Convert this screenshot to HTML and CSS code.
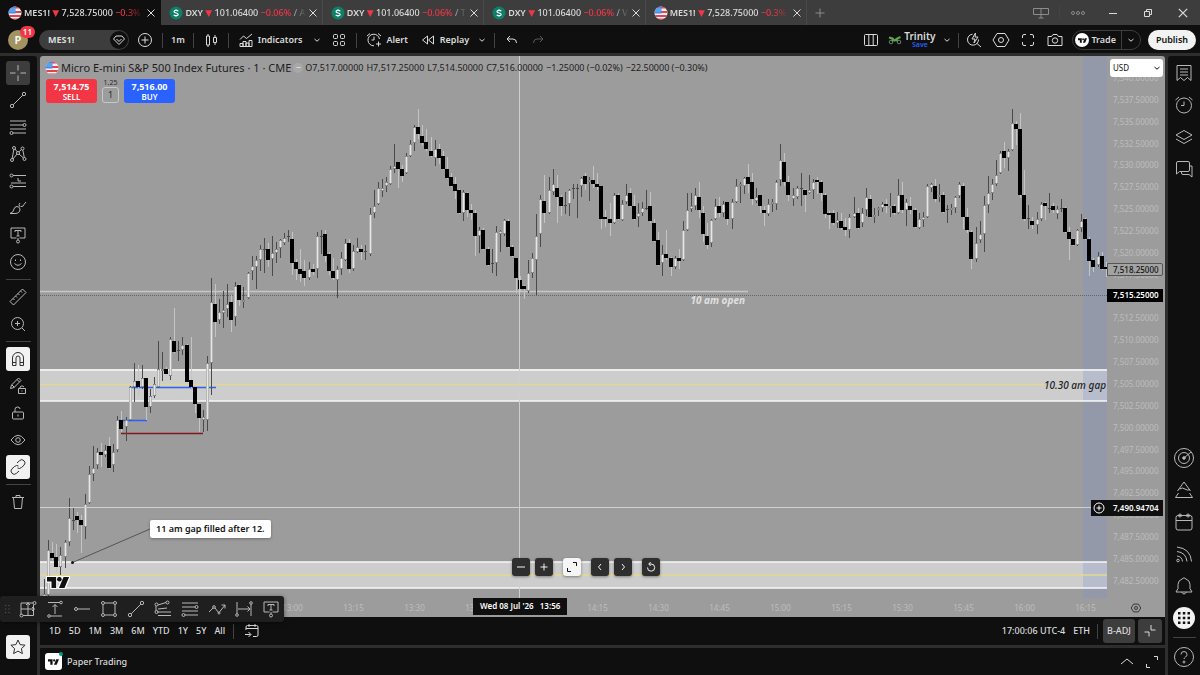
FILE: index.html
```
<!DOCTYPE html>
<html lang="en">
<head>
    <meta charset="UTF-8">
    <title>MES1! 7,528.75000</title>
    <link rel="stylesheet" href="styles.css">
</head>
<body>
    <!-- Shared icons -->
    <svg class="sprite" aria-hidden="true">
        <symbol id="flag" viewBox="0 0 14 14">
            <clipPath id="flagClip"><circle cx="7" cy="7" r="6.5"/></clipPath>
            <g clip-path="url(#flagClip)" stroke="none">
                <rect width="14" height="14" fill="#f2f2f2"/>
                <path d="M0 0h14v2.5H0zM0 5h14v2H0zM0 9h14v2H0zM0 12.5h14V14H0z" fill="#e8414d"/>
                <rect width="7.5" height="7.5" fill="#3e8fe8"/>
                <path d="M1.5 3h5M1.5 5h5" stroke="#dcebfb" stroke-width="0.8" stroke-dasharray="1 1"/>
            </g>
        </symbol>
        <symbol id="dollar" viewBox="0 0 14 14">
            <circle cx="7" cy="7" r="6.5" fill="#0d8067" stroke="none"/>
            <path d="M9.2 5.2C8.8 4.2 5 4 5 5.7c0 1.6 4.2 1 4.2 2.7 0 1.7-4 1.5-4.4.3M7 3.2v1M7 9.8v1" stroke="#fff" stroke-width="1.2" fill="none"/>
        </symbol>
        <symbol id="close" viewBox="0 0 10 10"><path d="M1.5 1.5l7 7M8.5 1.5l-7 7"/></symbol>
        <symbol id="chevron" viewBox="0 0 10 10"><path d="M2.5 4L5 6.2 7.5 4"/></symbol>
        <symbol id="tv" viewBox="0 0 24 12">
            <path d="M0 0h10v12H5V5H0z M18 0h6l-5 12h-6z" stroke="none"/><circle cx="13.5" cy="2.5" r="2.5" stroke="none"/>
        </symbol>
        <symbol id="textnote" viewBox="0 0 20 20">
            <path d="M3 3h14v10h-5.500M8.500 13H3V3M10 13v2M7 7V5.500h6V7M10 5.500V11M8.500 11h3"/><circle cx="10" cy="16.500" r="1.500"/>
        </symbol>
        <symbol id="trend" viewBox="0 0 20 20">
            <circle cx="4" cy="16" r="1.700"/><circle cx="16" cy="4" r="1.700"/><path d="M5.200 14.800L14.800 5.200"/>
        </symbol>
        <symbol id="levels" viewBox="0 0 20 20">
            <path d="M2 4h16M2 8h13M2 12h16M5 16h13"/><circle cx="16.500" cy="8" r="1.500"/><circle cx="3.500" cy="16" r="1.500"/>
        </symbol>
        <symbol id="hexagon" viewBox="0 0 20 20">
            <path d="M6 3.500h8L18 10l-4 6.500H6L2 10z"/><circle cx="10" cy="10" r="2.500"/>
        </symbol>
    </svg>

    <header class="titlebar">
        <nav class="tabs">
            <a class="tab active" href="#"><svg class="coin"><use href="#flag"/></svg><span class="tab-text"><b>MES1!</b> <i class="down">▼</i> 7,528.75000 <span class="neg">−0.3%</span></span><svg class="x"><use href="#close"/></svg></a>
            <a class="tab" href="#"><svg class="coin"><use href="#dollar"/></svg><span class="tab-text"><b>DXY</b> <i class="down">▼</i> 101.06400 <span class="neg">−0.06%</span> / A</span><svg class="x"><use href="#close"/></svg></a>
            <a class="tab" href="#"><svg class="coin"><use href="#dollar"/></svg><span class="tab-text"><b>DXY</b> <i class="down">▼</i> 101.06400 <span class="neg">−0.06%</span> / T</span><svg class="x"><use href="#close"/></svg></a>
            <a class="tab" href="#"><svg class="coin"><use href="#dollar"/></svg><span class="tab-text"><b>DXY</b> <i class="down">▼</i> 101.06400 <span class="neg">−0.06%</span> / V</span><svg class="x"><use href="#close"/></svg></a>
            <a class="tab" href="#"><svg class="coin"><use href="#flag"/></svg><span class="tab-text"><b>MES1!</b> <i class="down">▼</i> 7,528.75000 <span class="neg">−0.3%</span></span><svg class="x"><use href="#close"/></svg></a>
        </nav>
        <button class="bare new-tab" aria-label="New tab"><svg class="ic12" viewBox="0 0 12 12"><path d="M6 1.500v9M1.500 6h9"/></svg></button>
        <div class="window-buttons">
            <button class="bare dim" aria-label="Split"><svg class="ic20" viewBox="0 0 20 20"><path d="M2.500 5.500h15v6h-15zM10 5.500V15M7.500 15h5M6 11.500h8"/></svg></button>
            <span class="sep"></span>
            <button class="bare dim" aria-label="More"><svg class="ic20" viewBox="0 0 20 20"><circle cx="5" cy="10" r="1.500"/><circle cx="10" cy="10" r="1.500"/><circle cx="15" cy="10" r="1.500"/></svg></button>
            <button class="bare" aria-label="Minimize"><svg class="ic12" viewBox="0 0 12 12"><path d="M2 6.500h8"/></svg></button>
            <button class="bare" aria-label="Restore"><svg class="ic12" viewBox="0 0 12 12"><path d="M2.500 4.500h5v5h-5zM4.500 4.500v-2h5v5h-2"/></svg></button>
            <button class="bare" aria-label="Close"><svg class="ic12"><use href="#close"/></svg></button>
        </div>
    </header>

    <div class="toolbar">
        <div class="avatar">P<span class="badge">11</span></div>
        <button class="symbol-search">MES1!<span class="gem"><svg class="ic14" viewBox="0 0 14 14"><path d="M4 3h6l2.500 3L7 11.500 1.500 6zM4.500 6L7 8.500 9.500 6"/></svg></span></button>
        <button class="bare" aria-label="Compare"><svg class="ic20" viewBox="0 0 20 20"><circle cx="10" cy="10" r="6.500"/><path d="M10 6.500v7M6.500 10h7"/></svg></button>
        <span class="sep"></span>
        <button class="bare interval">1m</button>
        <span class="sep"></span>
        <button class="bare" aria-label="Candles"><svg class="ic20" viewBox="0 0 20 20"><path d="M5.500 6h3v9h-3zM7 4v2M7 15v2M12.500 7.500h3v5h-3zM14 5v2.500M14 12.500V15"/></svg></button>
        <span class="sep"></span>
        <button class="bare labelled indicators"><svg class="ic20" viewBox="0 0 20 20"><path d="M4 16.500v-3h3v3M7 16.500v-5h3v5M10 16.500V13h3v3.500M13 16.500v-6h3v6M4 16.500h12M4 9.500l3.500-3.500 3 2.500L16 4"/></svg>Indicators</button>
        <button class="bare" aria-label="Favorite indicators"><svg class="ic10"><use href="#chevron"/></svg></button>
        <button class="bare layouts" aria-label="Templates"><svg class="ic20" viewBox="0 0 20 20"><rect x="4.500" y="4.500" width="4" height="4" rx="1"/><rect x="11.500" y="4.500" width="4" height="4" rx="1"/><rect x="4.500" y="11.500" width="4" height="4" rx="1"/><rect x="11.500" y="11.500" width="4" height="4" rx="1"/></svg></button>
        <span class="sep"></span>
        <button class="bare labelled"><svg class="ic20" viewBox="0 0 20 20"><path d="M15.500 9A5.800 5.800 0 1 0 10 15.800M10 6.500V10H7.500M3 6l3-2.500M14 3.500L17 6M14.500 11.500v5M12 14h5"/></svg>Alert</button>
        <button class="bare labelled replay"><svg class="ic20" viewBox="0 0 20 20"><path d="M9.500 6v8l-5-4zM15.500 6v8l-5-4z"/></svg>Replay</button>
        <button class="bare" aria-label="Replay menu"><svg class="ic10"><use href="#chevron"/></svg></button>
        <span class="sep"></span>
        <button class="bare undo" aria-label="Undo"><svg class="ic20" viewBox="0 0 20 20"><path d="M8 6L5 9l3 3M5 9h6q3.500 0 3.500 4"/></svg></button>
        <button class="bare undo faded" aria-label="Redo"><svg class="ic20" viewBox="0 0 20 20"><path d="M12 6l3 3-3 3M15 9H9q-3.500 0-3.500 4"/></svg></button>

        <div class="toolbar-right">
            <button class="bare" aria-label="Layout"><svg class="ic20" viewBox="0 0 20 20"><rect x="3.500" y="4.500" width="13" height="11" rx="1"/><path d="M7.800 4.500v11M12.200 4.500v11"/></svg></button>
            <button class="bare trinity"><svg class="bike" viewBox="0 0 14 10"><circle cx="3" cy="7" r="1.800" stroke="#6f7f74"/><circle cx="11" cy="7" r="1.800" stroke="#6f7f74"/><path d="M1 2.500l3.500 1 2 2 2.500-2L12.500 2M3.500 5.500l3.500-.5 3 .5" stroke="#5da54a" stroke-width="2"/></svg><span>Trinity<small>Save</small></span></button>
            <button class="bare trinity-menu" aria-label="Layout menu"><svg class="ic10"><use href="#chevron"/></svg></button>
            <span class="sep"></span>
            <button class="bare" aria-label="Quick search"><svg class="ic20" viewBox="0 0 20 20"><path d="M8.500 4.200A5.500 5.500 0 1 0 14.500 9.500M13 13.500l4 3.500M11.500 3L8 9h3l-1 4 4-6h-3z"/></svg></button>
            <button class="bare" aria-label="Settings"><svg class="ic20"><use href="#hexagon"/></svg></button>
            <button class="bare" aria-label="Fullscreen"><svg class="ic20" viewBox="0 0 20 20"><path d="M4.500 8V6q0-1.500 1.500-1.500h2M12 4.500h2q1.500 0 1.500 1.500v2M15.500 12v2q0 1.500-1.500 1.500h-2M8 15.500H6q-1.500 0-1.500-1.500v-2"/></svg></button>
            <button class="bare" aria-label="Snapshot"><svg class="ic20" viewBox="0 0 20 20"><path d="M3 6.500h3.500L8 4.500h4l1.500 2H17v9H3z"/><circle cx="10" cy="10.500" r="2.700"/></svg></button>
            <div class="trade">
                <button class="bare trade-main"><span class="tv-badge"><svg><use href="#tv"/></svg></span>Trade</button>
                <button class="bare trade-menu" aria-label="Trade menu"><svg class="ic10"><use href="#chevron"/></svg></button>
            </div>
            <button class="publish">Publish</button>
        </div>
    </div>

    <div class="workspace">
        <aside class="drawing">
            <button class="tool on" aria-label="Cross"><svg class="ic20" viewBox="0 0 20 20"><path d="M10 2v5.500M10 12.500V18M2 10h5.500M12.500 10H18"/></svg></button>
            <button class="tool" aria-label="Trend line"><svg class="ic20"><use href="#trend"/></svg></button>
            <button class="tool" aria-label="Fib retracement"><svg class="ic20"><use href="#levels"/></svg></button>
            <button class="tool" aria-label="Patterns"><svg class="ic20" viewBox="0 0 20 20"><circle cx="4" cy="16" r="1.500"/><circle cx="6" cy="4" r="1.500"/><circle cx="10" cy="9" r="1.500"/><circle cx="14.500" cy="4.500" r="1.500"/><circle cx="16.500" cy="15" r="1.500"/><path d="M4.200 14.500L5.800 5.500M7 5l2.200 2.800M11 7.800l2.500-2.300M14.800 6l1.500 7.500M5 15l4-5M11 10l4.500 4"/></svg></button>
            <button class="tool" aria-label="Forecast"><svg class="ic20" viewBox="0 0 20 20"><path d="M5 4.500h13M5 15.500h13M3 12h15M10 7v3h3"/><circle cx="3.500" cy="4.500" r="1.500"/><circle cx="3.500" cy="15.500" r="1.500"/></svg></button>
            <button class="tool" aria-label="Brush"><svg class="ic20" viewBox="0 0 20 20"><path d="M2 15.500q3.500-1 4-4.500.7-2.500 3-2.500t3 2.500q0 4.500-5 4.500zM11.500 8.500Q10.500 6 12 5M12.500 8.500q3 .5 3.500-2L18 4"/></svg></button>
            <button class="tool" aria-label="Text"><svg class="ic20"><use href="#textnote"/></svg></button>
            <button class="tool" aria-label="Icons"><svg class="ic20" viewBox="0 0 20 20"><circle cx="10" cy="10" r="7.500"/><path d="M6.500 11.500q3.500 3.500 7 0M7.500 7.500v1.500M12.500 7.500v1.500"/></svg></button>
            <span class="rule"></span>
            <button class="tool" aria-label="Measure"><svg class="ic20" viewBox="0 0 20 20"><path d="M2 14.500L14.500 2 18 5.500 5.500 18zM5 11.500l1.500 1.500M7.500 9l1.500 1.500M10 6.500l1.500 1.500M12.500 4l1.500 1.500"/></svg></button>
            <button class="tool" aria-label="Zoom in"><svg class="ic20" viewBox="0 0 20 20"><circle cx="9.500" cy="9.500" r="6"/><path d="M14 14l3 3M9.500 7v5M7 9.500h5"/></svg></button>
            <span class="rule"></span>
            <button class="tool lit" aria-label="Magnet"><svg class="ic20" viewBox="0 0 20 20"><path d="M4.500 16.500V9a5.500 5.500 0 0 1 11 0v7.500h-3.500V9a2 2 0 0 0-4 0v7.500zM4.500 13.500H8M12 13.500h3.500"/></svg></button>
            <button class="tool" aria-label="Keep drawing"><svg class="ic20" viewBox="0 0 20 20"><path d="M2.500 12.500l1-3.500 7-7 2.500 2.500-7 7zM4 9l2.500 2.500M9 3.500L11.500 6"/><path d="M10.500 12.500h7v5h-7zM12 12.500V11q2-2.500 4 0M14 14.500v1"/></svg></button>
            <button class="tool" aria-label="Lock"><svg class="ic20" viewBox="0 0 20 20"><rect x="4.500" y="9" width="11" height="7" rx="1"/><path d="M7 9V6.500q0-2.500 2.500-2.500T12 6M10 11.500v2"/></svg></button>
            <button class="tool" aria-label="Hide"><svg class="ic20" viewBox="0 0 20 20"><path d="M3 10q7-9.500 14 0-7 9.500-14 0z"/><circle cx="10" cy="10" r="2.300"/></svg></button>
            <button class="tool lit" aria-label="Link"><svg class="ic20" viewBox="0 0 20 20"><path d="M9 6l2.500-2.300a3 3 0 0 1 4.500 4.500L13.500 10.500q-2 1.700-4 .5M11 14l-2.500 2.300A3 3 0 0 1 4 11.800L6.500 9.500q2-1.700 4-.5"/></svg></button>
            <span class="rule"></span>
            <button class="tool" aria-label="Remove"><svg class="ic20" viewBox="0 0 20 20"><path d="M4 5.500h12M8 5.500v-2h4v2M5.500 5.500l1 11h7l1-11"/></svg></button>
            <button class="tool lit star" aria-label="Favorites"><svg class="ic20" viewBox="0 0 20 20"><path d="M10 3l2.100 4.600 5 .6-3.700 3.400 1 5L10 14.100 5.600 16.600l1-5L2.900 8.200l5-.6z"/></svg></button>
        </aside>

        <main class="center">
            <section class="chart">
                <div class="plot">
                    <svg id="plot" class="plot-svg" viewBox="40 56 1067 542" preserveAspectRatio="none">
                        <rect x="40" y="369" width="1067" height="32" fill="#cdcdcd"/>
                        <rect x="40" y="562" width="1067" height="26" fill="#cdcdcd"/>
                        <rect x="1083" y="56" width="24" height="542" fill="#7c90d0" fill-opacity="0.250"/>
                        <path d="M40 370h1067M40 401h1067M40 562h1067M40 588h1067" stroke="#f8f8f8" stroke-width="1.500"/>
                        <path d="M40 384.500h1004M40 575h1067" stroke="#e3d98c" stroke-width="1.500"/>
                        <path d="M40 291.500h708" stroke="#c6c6c6" stroke-width="1.500"/>
                        <path d="M40 295.500h1067" stroke="#666" stroke-dasharray="1 1"/>
                        <path d="M129 387.500h87M119 420.500h28" stroke="#2962ff" stroke-width="1.500"/>
                        <path d="M121 433.500h82" stroke="#801922" stroke-width="1.500"/>
                        <g id="candles"></g>
                        <path d="M72.500 562.500L150 529" stroke="#555"/>
                        <circle cx="72.500" cy="562.500" r="1.500" fill="#111"/>
                        <path d="M519.500 56v542M40 507.500h1067" stroke="#cfcfcf"/>
                    </svg>

                    <div class="legend">
                        <svg class="coin"><use href="#flag"/></svg>
                        <span class="name">Micro E-mini S&amp;P 500 Index Futures · 1 · CME</span>
                        <span class="status">−</span>
                        <div class="ohlc"><span>O7,517.00000</span><span>H7,517.25000</span><span>L7,514.50000</span><span>C7,516.00000</span><span>−1.25000 (−0.02%)</span><span>−22.50000 (−0.30%)</span></div>
                    </div>
                    <div class="orders">
                        <button class="order sell">7,514.75<span>SELL</span></button>
                        <div class="spread">1.25<span>1</span></div>
                        <button class="order buy">7,516.00<span>BUY</span></button>
                    </div>

                    <span class="note open-note">10 am open</span>
                    <span class="note gap-note">10.30 am gap</span>
                    <span class="callout">11 am gap filled after 12.</span>
                    <svg class="tv-mark" viewBox="-2 -2 28 16"><use href="#tv" x="0" y="0" width="24" height="12" class="halo"/></svg>

                    <div class="chart-nav">
                        <button aria-label="Zoom out"><svg viewBox="0 0 18 18"><path d="M5 9h8"/></svg></button>
                        <button aria-label="Zoom in"><svg viewBox="0 0 18 18"><path d="M5.500 9h7M9 5.500v7"/></svg></button>
                        <button class="lit" aria-label="Maximize"><svg viewBox="0 0 18 18"><path d="M10 4.500h3.500V8M8 13.500H4.500V10"/></svg></button>
                        <button aria-label="Scroll left"><svg viewBox="0 0 18 18"><path d="M10 6L7.500 9l2.500 3"/></svg></button>
                        <button aria-label="Scroll right"><svg viewBox="0 0 18 18"><path d="M8 6l2.500 3L8 12"/></svg></button>
                        <button aria-label="Reset"><svg viewBox="0 0 18 18"><path d="M5.500 9.500A3.600 3.600 0 1 0 9 6H7M8.700 4L6.700 6l2 2"/></svg></button>
                    </div>
                </div>

                <div class="scale">
                    <div id="prices" class="prices"></div>
                    <select class="currency" aria-label="Currency"><option>USD</option></select>
                    <svg class="ic10 currency-arrow"><use href="#chevron"/></svg>
                    <span class="price-tag last">7,518.25000</span>
                    <span class="price-tag line">7,515.25000</span>
                    <span class="price-tag cross"><svg class="ic14" viewBox="0 0 14 14"><circle cx="7" cy="7" r="5"/><path d="M7 4.500v5M4.500 7h5"/></svg>7,490.94704</span>
                </div>

                <div class="time-axis">
                    <div class="times"><span>13:00</span><span>13:15</span><span>13:30</span><span>13:45</span><span>14:00</span><span>14:15</span><span>14:30</span><span>14:45</span><span>15:00</span><span>15:15</span><span>15:30</span><span>15:45</span><span>16:00</span><span>16:15</span></div>
                    <svg class="axis-settings"><use href="#hexagon"/></svg>
                    <span class="time-tag">Wed 08 Jul '26&nbsp;&nbsp; 13:56</span>
                </div>
            </section>

            <div class="range-bar">
                <button class="bare">1D</button><button class="bare">5D</button><button class="bare">1M</button><button class="bare">3M</button><button class="bare">6M</button><button class="bare">YTD</button><button class="bare">1Y</button><button class="bare">5Y</button><button class="bare">All</button>
                <span class="sep"></span>
                <button class="bare" aria-label="Go to date"><svg class="ic20" viewBox="0 0 20 20"><path d="M4 9V6q0-1.500 1.500-1.500h9Q16 4.500 16 6v8q0 1.500-1.500 1.500H11M4 7.500h12M7 3v3M13 3v3M3 13.500h5.500M6.500 11l2.500 2.500L6.500 16"/></svg></button>
                <div class="range-right">
                    <button class="bare">17:00:06 UTC-4</button>
                    <button class="bare">ETH</button>
                    <span class="sep"></span>
                    <button class="chip">B-ADJ</button>
                    <button class="chip square" aria-label="Log"><svg class="ic20" viewBox="0 0 20 20"><path d="M11 4v5h4.500M4.500 11H9v4.500"/></svg></button>
                </div>
            </div>

            <div class="trading-bar">
                <span class="tv-square"><svg><use href="#tv"/></svg></span>
                <button class="bare">Paper Trading</button>
                <div class="trading-right">
                    <button class="bare" aria-label="Open panel"><svg class="ic20" viewBox="0 0 20 20"><path d="M4 12l6-5 6 5"/></svg></button>
                    <button class="bare" aria-label="Maximize panel"><svg class="ic20" viewBox="0 0 20 20"><path d="M12 4.500h3.500V8M8 15.500H4.500V12"/></svg></button>
                </div>
            </div>
        </main>

        <aside class="widgets">
            <button class="bare" aria-label="Watchlist"><svg viewBox="0 0 22 22"><path d="M4 3.500h14v15l-3.500-3-3.500 3-3.500-3-3.500 3zM7 7h8M7 10h8M7 13h8"/></svg></button>
            <button class="bare" aria-label="Alerts"><svg viewBox="0 0 22 22"><circle cx="11" cy="11.500" r="7.500"/><path d="M11 7.500v4H8M2.500 6L6 3M16 3l3.500 3"/></svg></button>
            <button class="bare" aria-label="Object tree"><svg viewBox="0 0 22 22"><path d="M11 4.500l8 4.500-8 4.500L3 9zM3 13l8 4.500 8-4.500"/></svg></button>
            <button class="bare" aria-label="Chat"><svg viewBox="0 0 22 22"><path d="M5 3.500h10q1.500 0 1.500 1.500v7q0 1.500-1.500 1.500H6.500L3.500 16V5q0-1.500 1.500-1.500zM16.500 8h2.500v11l-3-2.500H10q-1.500 0-1.500-1.500v-1.500"/></svg></button>
            <span class="spacer"></span>
            <button class="bare" aria-label="Screener"><svg viewBox="0 0 22 22"><circle cx="11" cy="11" r="9.500"/><circle cx="11" cy="11" r="5.500"/><circle cx="11" cy="11" r="1.300" fill="currentColor"/><path d="M11 11l7-6"/></svg></button>
            <button class="bare" aria-label="Pine"><svg viewBox="0 0 22 22"><path d="M5.500 14L2.500 18.500h17L16.500 14M4.500 12L11 3l6.500 9M6.500 10q3-2 5.500 0t5 .5"/></svg></button>
            <button class="bare" aria-label="Calendar"><svg viewBox="0 0 22 22"><rect x="3" y="4.500" width="16" height="14.500" rx="2"/><path d="M3 9.500h16"/><circle cx="7" cy="4.500" r="1.500"/><circle cx="15" cy="4.500" r="1.500"/></svg></button>
            <button class="bare" aria-label="News"><svg viewBox="0 0 22 22"><circle cx="5" cy="17.500" r="1.300"/><path d="M4 13q5 .5 5.500 5.500M4 8.500q9 1 10 10M4 4q13.500 1.500 14.500 14.500"/></svg></button>
            <button class="bare" aria-label="Notifications"><svg viewBox="0 0 22 22"><path d="M3 17h16l-2-3.500V9.500q0-4-4-5.500-2-2.500-4 0-4 1.500-4 5.500v4zM8.500 17q2.500 4 5 0"/></svg></button>
            <button class="bare apps" aria-label="Products"><svg viewBox="0 0 22 22"><path d="M5 5h2.500v2.500H5zM9.800 5h2.500v2.500H9.800zM14.500 5H17v2.500h-2.500zM5 9.800h2.500v2.500H5zM9.800 9.800h2.500v2.500H9.800zM14.500 9.800H17v2.500h-2.500zM5 14.500h2.500V17H5zM9.800 14.500h2.500V17H9.800zM14.500 14.500H17V17h-2.500z"/></svg></button>
            <span class="rule"></span>
            <button class="bare help" aria-label="Help"><svg viewBox="0 0 22 22"><circle cx="11" cy="11" r="9.500"/><path d="M8 8.500q0-3 3-3t3 3q0 1.500-1.500 2.500T11 13"/><circle cx="11" cy="16" r="1"/></svg></button>
        </aside>
    </div>

    <!-- Floating favorites toolbar -->
    <div class="favorites">
        <svg class="grip" viewBox="0 0 8 10"><path d="M1 1h1.500M5 1h1.500M1 5h1.500M5 5h1.500M1 9h1.500M5 9h1.500"/></svg>
        <button class="bare" aria-label="Position"><svg class="ic20" viewBox="0 0 20 20"><path d="M3 4h12M3 4v12M5 16.500h10.500V5.500M3 10h14M10 3v14M8 6l2-2 2 2M14 8l2 2-2 2"/><circle cx="16.500" cy="4" r="1.500"/><circle cx="3.500" cy="16.500" r="1.500"/></svg></button>
        <button class="bare" aria-label="Price range"><svg class="ic20" viewBox="0 0 20 20"><path d="M3 3.500h12M5 17h12M10 15V5.500M7.500 8L10 5.500 12.500 8"/><circle cx="16" cy="3.500" r="1.300"/><circle cx="4" cy="17" r="1.300"/></svg></button>
        <button class="bare" aria-label="Horizontal ray"><svg class="ic20" viewBox="0 0 20 20"><circle cx="4" cy="10" r="1.500"/><path d="M5.500 10H18"/></svg></button>
        <button class="bare" aria-label="Rectangle"><svg class="ic20" viewBox="0 0 20 20"><path d="M6 4h8M6 16h8M4 6v8M16 6v8"/><circle cx="4" cy="4" r="1.500"/><circle cx="16" cy="4" r="1.500"/><circle cx="4" cy="16" r="1.500"/><circle cx="16" cy="16" r="1.500"/></svg></button>
        <button class="bare" aria-label="Trend line"><svg class="ic20"><use href="#trend"/></svg></button>
        <button class="bare" aria-label="Fib fan"><svg class="ic20" viewBox="0 0 20 20"><path d="M3 12v-5M5 6l8-2.500M4 13h14M5 10l9-1M5 16.500h13"/><circle cx="3.500" cy="5.500" r="1.500"/><circle cx="14.500" cy="3.500" r="1.500"/><circle cx="3.500" cy="13" r="1.500"/></svg></button>
        <button class="bare" aria-label="Fib levels"><svg class="ic20"><use href="#levels"/></svg></button>
        <button class="bare" aria-label="Path"><svg class="ic20" viewBox="0 0 20 20"><path d="M2 13l4-4M8 9l3.500 4.500M12.500 13L18 6M14.500 6H18v3.500"/><circle cx="7" cy="8" r="1.300"/><circle cx="12" cy="14" r="1"/></svg></button>
        <button class="bare" aria-label="Date range"><svg class="ic20" viewBox="0 0 20 20"><path d="M3 3v12M17 5v12M4 10h12M13.500 7.500L16 10l-2.500 2.500"/><circle cx="3" cy="16" r="1.300"/><circle cx="17" cy="4" r="1.300"/></svg></button>
        <button class="bare" aria-label="Text"><svg class="ic20"><use href="#textnote"/></svg></button>
    </div>

    <script src="chart.js"></script>
</body>
</html>
```
FILE: styles.css
```
* {
    box-sizing: border-box;
}
body {
    margin: 0;
    height: 100vh;
    display: flex;
    flex-direction: column;
    background: #2e2e2e;
    color: #dbdbdb;
    font-family: "Noto Sans", "Open Sans", sans-serif;
    font-size: 9px;
    line-height: 12px;
    overflow: hidden;
}
svg {
    fill: none;
    stroke: currentColor;
    flex: none;
    display: block;
}
button, select {
    font: inherit;
    color: inherit;
    padding: 0;
    border: 0;
}
a {
    color: inherit;
    text-decoration: none;
}
.sprite {
    position: absolute;
    width: 0;
    height: 0;
}
.ic10 { width: 10px; height: 10px; }
.ic12 { width: 12px; height: 12px; }
.ic14 { width: 14px; height: 14px; }
.ic20 { width: 20px; height: 20px; }
.bare {
    background: none;
    display: flex;
    align-items: center;
    font-weight: 500;
}
.sep {
    width: 1px;
    height: 15px;
    background: #434343;
}
.coin {
    width: 14px;
    height: 14px;
}

/* Window tabs */
.titlebar {
    display: flex;
    align-items: center;
    height: 25px;
    flex: none;
    background: #3d3d3d;
}
.tabs {
    display: flex;
    width: 807px;
    height: 25px;
}
.tab {
    flex: 1;
    min-width: 0;
    display: flex;
    align-items: center;
    gap: 2px;
    padding: 0 4px 0 8px;
    border-right: 1px solid #4a4a4a;
}
.tab.active {
    background: #0f0f0f;
    border-color: #0f0f0f;
}
.tab-text {
    flex: 1;
    white-space: nowrap;
    overflow: hidden;
    font-weight: 500;
    -webkit-mask-image: linear-gradient(to right, #000 85%, transparent);
    mask-image: linear-gradient(to right, #000 85%, transparent);
}
.tab-text b {
    font-weight: 600;
}
.down {
    color: #f23645;
    font-family: "DejaVu Sans", sans-serif;
    font-size: 9px;
    font-style: normal;
}
.neg {
    color: #f23645;
}
.x {
    width: 10px;
    height: 10px;
}
.new-tab {
    margin-left: 7px;
    color: #8c8c8c;
}
.window-buttons {
    display: flex;
    align-items: center;
    margin-left: auto;
    padding-right: 11px;
}
.window-buttons .sep {
    margin: 0 8px;
}
.window-buttons .dim {
    color: #8c8c8c;
}
.window-buttons .dim + .bare {
    margin: 0 23px 0 19px;
}
.window-buttons .bare:last-child {
    margin-left: 23px;
}

/* Top toolbar */
.toolbar {
    display: flex;
    align-items: center;
    height: 28px;
    flex: none;
    padding: 2px 4px 0 8px;
    margin-bottom: 3px;
    background: #0f0f0f;
}
.toolbar .bare {
    font-weight: 600;
}
.avatar {
    position: relative;
    width: 20px;
    height: 20px;
    margin-right: 11px;
    border-radius: 50%;
    background: #a39360;
    color: #fff;
    font-size: 11px;
    line-height: 20px;
    text-align: center;
    font-weight: 600;
}
.badge {
    position: absolute;
    top: -4px;
    right: -7px;
    padding: 0 3px;
    border-radius: 6px;
    background: #f23645;
    font-size: 8px;
    line-height: 12px;
}
.symbol-search {
    display: flex;
    align-items: center;
    justify-content: space-between;
    width: 90px;
    height: 20px;
    padding: 0 1px 0 9px;
    margin-right: 6px;
    border-radius: 10px;
    background: #3d3d3d;
    font-weight: 700;
}
.gem {
    padding: 2px;
    border-radius: 50%;
    background: #0f0f0f;
}
.toolbar > .sep {
    margin: 0 7px;
}
.interval {
    margin: 0 1px;
}
.labelled {
    gap: 2px;
}
.indicators {
    margin-right: 10px;
}
.layouts {
    margin-left: 7px;
}
.replay {
    margin: 0 8px 0 10px;
}
.undo + .undo {
    margin-left: 6px;
}
.faded {
    color: #5a5a5a;
}
.toolbar-right {
    display: flex;
    align-items: center;
    gap: 7px;
    margin-left: auto;
}
.trinity {
    gap: 2px;
    font-size: 10px;
    line-height: 9px;
}
.trinity small {
    display: block;
    color: #2962ff;
    font-size: 7px;
    line-height: 8px;
}
.bike {
    width: 14px;
    height: 10px;
}
.toolbar-right .sep {
    margin: 0 -2px 0 -1px;
}
.trade {
    display: flex;
    height: 20px;
    border: 1px solid #3d3d3d;
    border-radius: 10px;
}
.trade-main {
    gap: 2px;
    padding: 0 5px 0 2px;
}
.trade-menu {
    padding: 0 4px;
    border-left: 1px solid #3d3d3d;
}
.tv-badge {
    display: grid;
    place-items: center;
    width: 14px;
    height: 14px;
    border-radius: 50%;
    background: #fff;
}
.tv-badge svg {
    width: 9px;
    height: 5px;
    fill: #111;
}
.publish {
    width: 48px;
    height: 20px;
    border-radius: 10px;
    background: #f2f2f2;
    color: #0f0f0f;
    font-weight: 600;
}

/* Main area */
.workspace {
    flex: 1;
    min-height: 0;
    display: grid;
    grid-template-columns: 37px 1fr 32px;
    gap: 3px;
}
.drawing {
    display: flex;
    flex-direction: column;
    align-items: center;
    gap: 3px;
    padding: 5px 1px 16px 0;
    background: #0f0f0f;
    border-radius: 0 3px 0 0;
    color: #b8b8b8;
}
.tool {
    display: grid;
    place-items: center;
    width: 24px;
    height: 24px;
    border-radius: 3px;
    background: none;
}
.tool.on {
    background: #3d3d3d;
}
.tool.lit {
    background: #f2f2f2;
    color: #2e2e2e;
}
.star {
    margin-top: auto;
}
.rule {
    width: 25px;
    height: 1px;
    margin: 2px 0;
    background: #434343;
}
.center {
    min-width: 0;
    display: flex;
    flex-direction: column;
}

/* Chart */
.chart {
    flex: 1;
    min-height: 0;
    display: grid;
    grid-template: 1fr 19px / 1fr 58px;
    background: #9c9c9c;
    border-radius: 3px 3px 0 0;
}
.plot, .scale, .time-axis {
    position: relative;
    min-height: 0;
}
.plot-svg {
    position: absolute;
    width: 100%;
    height: 100%;
    stroke: none;
}
.legend {
    position: absolute;
    top: 5px;
    left: 5px;
    display: flex;
    align-items: center;
    color: #1c1c1c;
    white-space: nowrap;
}
.legend .name {
    margin: 0 2px;
    font-size: 11px;
    line-height: 14px;
}
.ohlc {
    display: flex;
    gap: 3px;
}
.status {
    width: 10px;
    height: 10px;
    margin-right: 2px;
    border-radius: 50%;
    background: #a8a8a8;
    color: #eee;
    line-height: 10px;
    text-align: center;
}
.orders {
    position: absolute;
    top: 23px;
    left: 6px;
    display: flex;
    gap: 5px;
}
.order {
    width: 51px;
    height: 24px;
    border-radius: 3px;
    color: #fff;
    font-weight: 700;
    line-height: 10px;
}
.order span {
    display: block;
    font-size: 8px;
    line-height: 9px;
    font-weight: 600;
}
.sell {
    background: #f23645;
}
.buy {
    background: #2962ff;
}
.spread {
    width: 17px;
    color: #2a2a2a;
    font-size: 7px;
    line-height: 7px;
    text-align: center;
}
.spread span {
    display: block;
    height: 16px;
    margin-top: 1px;
    border: 1px solid #c9c9c9;
    border-radius: 3px;
    font-size: 9px;
    line-height: 14px;
}
.note {
    position: absolute;
    font-size: 10px;
    font-style: italic;
    white-space: nowrap;
}
.open-note {
    top: 238px;
    right: 362px;
    color: #e0e0e0;
    font-weight: 700;
}
.gap-note {
    top: 323px;
    right: 1px;
    color: #222;
    font-weight: 500;
}
.callout {
    position: absolute;
    top: 464px;
    left: 110px;
    padding: 3px 6px;
    border-radius: 2px;
    background: #fff;
    box-shadow: 0 1px 3px rgba(0, 0, 0, 0.3);
    color: #111;
    font-weight: 600;
}
.tv-mark {
    position: absolute;
    left: 5px;
    bottom: 8px;
    width: 26px;
    height: 15px;
    overflow: visible;
}
.halo {
    fill: #111;
    filter: drop-shadow(1px 0 0 #fff) drop-shadow(-1px 0 0 #fff) drop-shadow(0 1px 0 #fff) drop-shadow(0 -1px 0 #fff);
}
.chart-nav {
    position: absolute;
    left: 472px;
    bottom: 22px;
    display: flex;
    gap: 5px;
}
.chart-nav button {
    width: 18px;
    height: 18px;
    border-radius: 3px;
    background: #2e2e2e;
    color: #f2f2f2;
    box-shadow: 0 1px 3px rgba(0, 0, 0, 0.4);
}
.chart-nav .lit {
    margin: 0 5px;
    background: #f5f5f5;
    color: #111;
}
.chart-nav button:last-child {
    margin-left: 5px;
}

/* Price scale */
.prices {
    height: 100%;
    display: flex;
    flex-direction: column;
    justify-content: space-between;
    padding: 16px 0 11px 6px;
    color: #bdbdbd;
    font-size: 8px;
}
.currency {
    position: absolute;
    top: 3px;
    left: 3px;
    width: 53px;
    height: 18px;
    padding: 0 3px;
    border-radius: 3px;
    background: #fff;
    color: #111;
    font-size: 8px;
    appearance: none;
}
.currency-arrow {
    position: absolute;
    top: 7px;
    right: 3px;
    color: #111;
    pointer-events: none;
}
.price-tag {
    position: absolute;
    right: 2px;
    height: 13px;
    width: 56px;
    padding-left: 6px;
    font-size: 8px;
    font-weight: 600;
}
.last {
    top: 207px;
    border: 1px solid #555;
    border-radius: 0 2px 2px 0;
    background: #a3a3a3;
    color: #111;
    line-height: 11px;
    padding-left: 5px;
    font-weight: 500;
}
.line {
    top: 233px;
    background: #000;
    color: #fff;
}
.cross {
    top: 444px;
    display: flex;
    align-items: center;
    gap: 7px;
    width: 72px;
    height: 16px;
    padding-left: 1px;
    background: #0f0f0f;
    color: #fff;
}

/* Time axis */
.time-axis {
    grid-column: 1 / 3;
    display: flex;
    align-items: center;
    padding: 0 23px 0 222px;
    color: #bdbdbd;
    font-size: 8px;
}
.times {
    flex: 1;
    display: grid;
    grid-template-columns: repeat(14, 1fr);
    margin-right: 14px;
    text-align: center;
}
.axis-settings {
    width: 12px;
    height: 12px;
    color: #2e2e2e;
    stroke-width: 1.5px;
}
.time-tag {
    position: absolute;
    left: 433px;
    top: 0;
    padding: 2px 7px 3px;
    background: #0f0f0f;
    color: #fff;
    font-weight: 600;
}

/* Bars below the chart */
.range-bar, .trading-bar {
    display: flex;
    align-items: center;
    height: 28px;
    flex: none;
    background: #0f0f0f;
}
.range-bar {
    gap: 8px;
    padding: 0 3px 0 9px;
    margin-bottom: 3px;
}
.range-right, .trading-right {
    display: flex;
    align-items: center;
    gap: 8px;
    margin-left: auto;
}
.range-right .sep {
    margin: 0 -3px 0 -1px;
}
.chip {
    height: 24px;
    width: 32px;
    border-radius: 3px;
    background: #3d3d3d;
    font-weight: 500;
}
.square {
    display: grid;
    place-items: center;
    width: 24px;
    margin-left: -5px;
}
.trading-bar {
    gap: 5px;
    padding: 0 3px 0 5px;
    height: 27px;
}
.tv-square {
    position: relative;
    display: grid;
    place-items: center;
    width: 17px;
    height: 17px;
    border-radius: 3px;
    background: #fff;
}
.tv-square svg {
    width: 11px;
    height: 6px;
    fill: #111;
}
.tv-square::after {
    content: "";
    position: absolute;
    top: -1px;
    right: -1px;
    width: 4px;
    height: 4px;
    border-radius: 50%;
    background: #089981;
}
.trading-right {
    gap: 5px;
}

/* Right sidebar */
.widgets {
    display: flex;
    flex-direction: column;
    align-items: center;
    gap: 10px;
    padding: 6px 0 7px;
    background: #0f0f0f;
    border-radius: 3px 0 0 0;
    color: #b8b8b8;
}
.widgets svg {
    width: 22px;
    height: 22px;
}
.spacer {
    flex: 1;
}
.apps {
    border-radius: 50%;
    background: #f2f2f2;
}
.apps svg {
    fill: #0f0f0f;
    stroke: none;
}
.widgets .rule {
    width: 23px;
    margin: -2px 0;
}

/* Favorites */
.favorites {
    position: absolute;
    left: 0;
    bottom: 53px;
    display: flex;
    align-items: center;
    gap: 7px;
    height: 26px;
    padding: 0 3px 0 4px;
    border-radius: 3px;
    background: #1f1f1f;
    box-shadow: 0 1px 4px rgba(0, 0, 0, 0.5);
    color: #b8b8b8;
}
.grip {
    width: 7px;
    height: 10px;
    color: #5a5a5a;
}
```
FILE: chart.js
```
// One bar per minute: high, body top, body bottom, low (plot units), 1 = up / 0 = down
const bars = `
579 594 600 602 1|540 550 595 600 1|542 553 558 560 0|544 557 567 572 0|547 555 567 575 1|540 542 557 568 1
498 518 542 546 1|507 520 521 530 1|512 516 520 533 0|515 520 525 553 0|494 504 527 539 1|466 474 503 504 1
446 468 474 481 1|448 452 465 469 1|443 452 455 467 0|445 450 455 457 1|437 446 468 469 0|444 452 465 472 1
416 420 450 452 1|411 420 429 432 0|417 420 427 441 1|386 387 420 421 1|363 381 387 402 1|365 381 387 397 0
365 378 387 389 1|377 378 407 420 0|389 396 407 413 1|377 384 396 398 1|341 369 387 388 1|352 369 371 381 1
367 369 374 376 0|337 339 376 380 1|308 341 352 353 0|341 350 351 361 1|337 345 350 355 1|344 345 382 383 0
337 380 387 388 0|386 387 404 413 0|404 404 418 432 0|410 417 420 432 1|356 363 420 431 1|278 302 363 395 1
284 304 322 337 0|299 312 320 324 1|291 310 313 328 1|284 304 309 317 1|295 302 320 332 0|282 286 317 326 1
284 285 300 306 0|287 300 302 308 1|272 273 298 299 1|256 266 271 280 1|256 260 267 289 1|245 249 260 271 1
238 249 250 273 1|243 249 260 267 0|236 253 259 276 1|242 249 253 263 1|239 240 248 258 1|233 238 243 245 1
230 236 237 242 1|232 239 263 275 0|259 262 269 280 0|249 269 274 282 0|260 271 278 286 0|262 269 278 280 1
264 269 272 275 0|232 236 269 278 1|230 236 237 254 1|230 234 256 262 0|252 254 271 275 0|258 271 278 280 0
266 269 280 298 1|252 258 269 275 1|239 243 260 261 1|239 243 269 273 0|245 251 269 271 1|238 247 252 253 1
245 249 252 260 0|245 251 252 260 1|208 214 254 256 1|190 206 213 218 1|182 188 204 205 1|179 188 191 197 1
177 182 186 192 1|166 169 184 185 1|144 166 169 173 1|162 162 169 188 0|165 169 176 182 0|153 156 173 174 1
140 144 156 157 1|125 127 143 151 1|109 127 134 139 0|125 136 143 145 0|129 142 149 151 0|137 151 156 157 0
140 149 158 166 1|144 149 158 164 0|151 156 169 170 0|157 169 178 179 0|173 177 186 187 0|177 184 191 199 0
189 190 213 214 0|190 192 213 221 1|192 193 210 217 0|204 210 213 220 0|210 213 236 256 0|227 230 236 253 1
228 230 249 250 0|247 249 265 266 0|249 263 264 273 1|226 232 263 276 1|230 231 234 252 1|219 220 234 236 1
219 221 247 248 0|245 247 256 257 0|258 258 278 293 0|276 280 289 292 0|285 286 289 299 0|260 273 291 293 1
253 258 273 278 1|214 236 260 295 1|195 199 234 247 1|175 201 213 223 0|177 190 213 214 1|169 184 192 195 1
175 188 197 223 0|195 197 206 216 0|192 205 206 214 1|189 190 204 216 1|184 188 189 199 1|184 188 189 218 1
177 178 186 197 1|173 176 184 190 0|177 180 182 201 1|166 180 184 188 0|173 184 187 190 0|186 186 219 229 0
210 217 219 227 0|203 219 223 236 0|193 195 223 224 1|193 195 219 220 0|200 204 220 221 1|184 195 202 204 1
188 193 206 207 0|195 206 219 220 0|203 213 217 227 1|202 208 213 216 1|190 208 209 210 1|192 206 221 223 0
219 223 241 242 0|232 240 265 266 0|245 254 263 276 1|230 254 258 260 0|257 258 267 276 0|256 258 267 269 1
249 258 261 269 0|221 230 260 261 1|193 210 230 231 1|193 206 209 212 1|188 195 206 210 1|182 197 210 218 0
206 213 234 242 0|223 236 245 249 0|219 220 243 247 1|199 206 219 220 1|197 206 213 217 0|201 204 213 217 1
202 202 219 225 0|199 202 219 229 1|179 186 202 203 1|182 184 186 203 1|177 178 186 194 1|164 177 184 193 0
173 182 199 205 0|188 197 201 203 1|195 195 206 213 0|206 210 213 226 0|199 204 214 216 1|199 202 204 212 1
180 182 204 210 1|144 160 180 186 1|153 162 182 186 0|176 182 195 201 0|188 195 199 206 1|186 188 197 199 1
173 188 189 206 1|189 190 195 212 0|175 190 193 194 1|179 182 190 199 1|177 180 182 194 0|180 182 193 201 0
193 195 214 218 0|211 213 215 229 0|210 213 223 225 0|212 220 223 228 1|213 221 228 230 0|218 227 230 236 0
214 217 230 238 1|197 213 217 218 1|208 213 228 229 0|208 213 223 227 1|188 197 210 216 1|195 199 217 218 0
208 215 217 223 1|207 208 210 216 1|202 204 208 212 1|199 204 206 213 0|193 206 208 217 1|204 206 213 215 0
179 195 213 214 1|182 195 210 213 0|199 202 210 226 1|197 206 210 214 0|208 210 227 228 0|213 219 228 229 1
212 217 220 227 1|184 186 217 218 1|183 184 188 192 1|179 186 199 202 0|184 195 197 202 1|192 195 212 213 0
205 209 210 223 1|204 208 210 215 1|196 197 208 213 1|182 184 196 198 1|183 186 217 229 0|208 217 230 233 0
230 232 259 269 0|227 243 259 262 1|221 234 240 243 1|196 205 234 252 1|176 193 205 213 1|179 184 193 200 1
160 175 184 186 1|151 153 173 174 1|142 151 158 168 0|149 151 158 171 1|109 123 150 151 1|121 124 129 145 0
113 129 195 198 0|170 195 219 221 0|205 218 219 229 1|217 221 225 229 0|212 219 225 234 1|202 204 219 221 1
202 203 206 220 0|193 208 209 213 1|203 206 210 213 0|206 209 214 219 1|199 208 209 212 1|207 208 232 233 0
227 232 239 260 0|238 239 245 246 0|229 230 245 246 1|214 221 228 232 1|218 219 239 240 0|237 239 261 276 0
258 260 267 272 0|252 256 265 267 1|252 256 269 270 0|262 267 269 277 0`.trim().split(/[|\n]/);

const firstX = 44.2;
const step = 4.067;

function rect(x, y, w, h, fill) {
    return `<rect x="${x}" y="${y}" width="${w}" height="${h}" fill="${fill}"/>`;
}

document.getElementById('candles').innerHTML = bars.map(function (bar, i) {
    const [high, top, bottom, low, up] = bar.split(' ').map(Number);
    const x = Math.round(firstX + i * step);
    const height = Math.max(1, bottom - top);
    let out = rect(x, high, 1, low - high, up ? '#4a4a4a' : '#c4c4c4');
    if (up) {
        out += rect(x - 1, top, 3, height, '#484848');
        if (height > 1) {
            out += rect(x - 0.7, top + 0.5, 2.4, height - 1, '#e6e6e6');
        }
    } else {
        out += rect(x - 2, top, 4, height, '#000');
    }
    return out;
}).join('');

// Price labels, every 2.5 points
let labels = '';
for (let price = 7540; price >= 7482.5; price -= 2.5) {
    labels += '<span>' + price.toLocaleString('en-US', { minimumFractionDigits: 5 }) + '</span>';
}
document.getElementById('prices').innerHTML = labels;
```
